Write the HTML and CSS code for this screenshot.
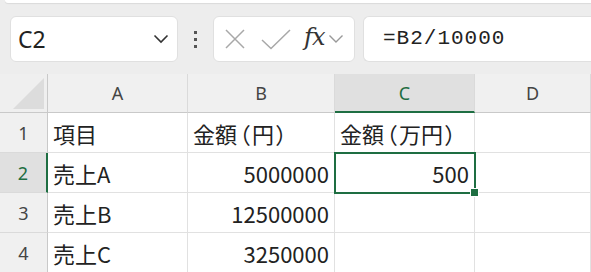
FILE: index.html
```html
<!DOCTYPE html>
<html lang="ja">
<head>
    <meta charset="UTF-8">
    <title>Sheet</title>
    <link rel="stylesheet" href="styles.css">
</head>
<body>
<div class="ribbon-edge"></div>

<div class="formula-row">
    <div class="name-box">
        <span class="name">C2</span>
        <svg class="chev" width="16" height="10" viewBox="0 0 16 10"><path d="M1.5 1.5 L8 8 L14.5 1.5" fill="none" stroke="#333" stroke-width="1.6"/></svg>
    </div>
    <div class="dots"><i></i><i></i><i></i></div>
    <div class="fx-box">
        <svg width="22" height="22" viewBox="0 0 22 22"><path d="M2 2 L20 20 M20 2 L2 20" stroke="#a8a8a8" stroke-width="1.5"/></svg>
        <svg class="ok" width="30" height="22" viewBox="0 0 30 22"><path d="M1 12 L10 20.5 L29 2" fill="none" stroke="#a8a8a8" stroke-width="1.5"/></svg>
        <span class="fx">fx</span>
        <svg width="16" height="10" viewBox="0 0 16 10"><path d="M1.5 1.5 L8 8 L14.5 1.5" fill="none" stroke="#999" stroke-width="1.4"/></svg>
    </div>
    <div class="formula">=B2/10000</div>
</div>

<div class="sheet">
    <div class="corner"><span class="tri"></span></div>
    <div class="col-head">A</div>
    <div class="col-head">B</div>
    <div class="col-head active">C</div>
    <div class="col-head">D</div>

    <div class="row-head">1</div>
    <div class="cell">項目</div>
    <div class="cell">金額<span class="paren">（</span>円<span class="paren">）</span></div>
    <div class="cell">金額<span class="paren">（</span>万円<span class="paren">）</span></div>
    <div class="cell"></div>

    <div class="row-head active">2</div>
    <div class="cell">売上A</div>
    <div class="cell num">5000000</div>
    <div class="cell num selected">500</div>
    <div class="cell"></div>

    <div class="row-head">3</div>
    <div class="cell">売上B</div>
    <div class="cell num">12500000</div>
    <div class="cell"></div>
    <div class="cell"></div>

    <div class="row-head">4</div>
    <div class="cell">売上C</div>
    <div class="cell num">3250000</div>
    <div class="cell"></div>
    <div class="cell"></div>
</div>
</body>
</html>
```

FILE: styles.css
```css
*{
    margin: 0;
    padding: 0;
    box-sizing: border-box;
}
html,body{
    width: 591px;
    height: 272px;
    overflow: hidden;
}
body{
    background-color: #ededed;
    font-family: "Noto Sans", "Noto Sans CJK JP", sans-serif;
    color: #222;
}
.ribbon-edge{
    height: 3px;
    margin-left: 5px;
    background-color: #fff;
    border-radius: 0 0 0 8px;
    box-shadow: 0 1px 1px rgba(0,0,0,.08);
}
.formula-row{
    display: flex;
    align-items: center;
    height: 46px;
    margin-top: 13px;
    padding-left: 10px;
}
.name-box{
    display: flex;
    align-items: center;
    justify-content: space-between;
    width: 168px;
    height: 46px;
    padding: 0 8px 0 7px;
    background-color: #fff;
    border: 1px solid #e0e0e0;
    border-radius: 6px;
}
.name{
    font-size: 23px;
    color: #222;
}
.dots{
    display: flex;
    flex-direction: column;
    gap: 4px;
    width: 35px;
    align-items: center;
}
.dots i{
    display: block;
    width: 3px;
    height: 3px;
    background-color: #555;
}
.fx-box{
    display: flex;
    align-items: center;
    width: 142px;
    height: 46px;
    padding-left: 10px;
    background-color: #fff;
    border: 1px solid #e0e0e0;
    border-radius: 6px;
}
.fx-box .ok{
    margin-left: 15px;
}
.fx{
    font-family: "DejaVu Serif", serif;
    font-style: italic;
    font-size: 24px;
    letter-spacing: -1px;
    color: #333;
    margin: -4px 4px 0 13px;
}
.formula{
    flex: 1;
    height: 46px;
    margin-left: 8px;
    padding-left: 19px;
    background-color: #fff;
    border: 1px solid #e0e0e0;
    border-right: none;
    border-radius: 6px 0 0 6px;
    font-family: "Liberation Mono", monospace;
    font-size: 21px;
    letter-spacing: 1px;
    line-height: 44px;
    color: #222;
}
.sheet{
    display: grid;
    grid-template-columns: 48px 140px 147px 140px 1fr;
    grid-template-rows: 39px 40px 40px 40px 40px;
    margin-top: 12px;
    background-color: #fff;
}
.corner{
    position: relative;
    background-color: #efefef;
    border-right: 1px solid #c9c9c9;
    border-bottom: 1px solid #c9c9c9;
}
.corner .tri{
    position: absolute;
    right: 3px;
    bottom: 3px;
    width: 0;
    height: 0;
    border-left: 31px solid transparent;
    border-bottom: 31px solid #dcdcdc;
}
.col-head{
    display: flex;
    align-items: center;
    justify-content: center;
    background-color: #f0f0f0;
    border-right: 1px solid #dadada;
    border-bottom: 1px solid #c9c9c9;
    font-size: 18px;
    color: #444;
}
.col-head.active{
    background-color: #e0e0e0;
    border-bottom: 2px solid #1e6e42;
    color: #1e6e42;
}
.row-head{
    display: flex;
    align-items: center;
    justify-content: center;
    background-color: #f0f0f0;
    border-right: 1px solid #c9c9c9;
    border-bottom: 1px solid #dadada;
    font-size: 18px;
    color: #444;
}
.row-head.active{
    background-color: #e0e0e0;
    border-right: 2px solid #1e6e42;
    color: #1e6e42;
}
.cell{
    display: flex;
    align-items: center;
    padding: 0 5px;
    border-right: 1px solid #e1e1e1;
    border-bottom: 1px solid #e1e1e1;
    font-family: "Noto Sans CJK JP", sans-serif;
    font-size: 22px;
    color: #222;
    white-space: pre;
}
.cell .paren{
    font-feature-settings: "palt";
    padding: 0 2px;
}
.cell.num{
    justify-content: flex-end;
}
.cell.selected{
    position: relative;
    outline: 2px solid #1e6e42;
    outline-offset: -1px;
}
.cell.selected::after{
    content: "";
    position: absolute;
    right: -5px;
    bottom: -5px;
    width: 7px;
    height: 7px;
    background-color: #1e6e42;
    border: 1px solid #fff;
}
```
